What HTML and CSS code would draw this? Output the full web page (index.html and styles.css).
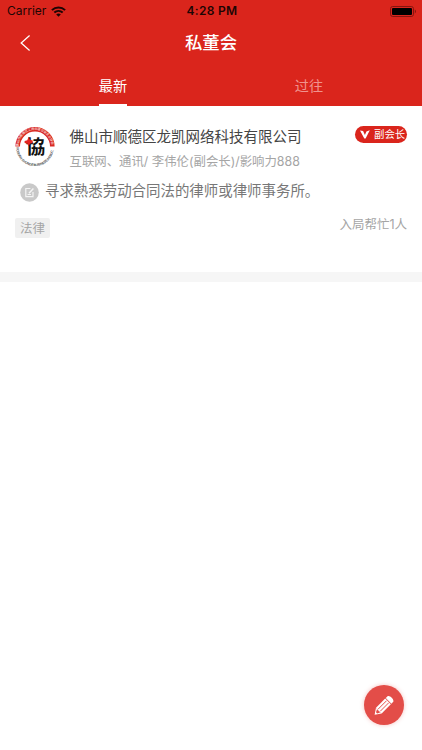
FILE: index.html
```
<!DOCTYPE html>
<html lang="zh-CN">
<head>
    <meta charset="UTF-8">
    <meta name="viewport" content="width=device-width, initial-scale=1.0">
    <title>私董会</title>
    <link rel="stylesheet" href="styles.css">
</head>
<body>
    <header class="header">
        <div class="status-bar">
            <div class="carrier">
                <span>Carrier</span>
                <svg class="wifi" width="15" height="11" viewBox="0 0 15 11" fill="none" stroke="#1d0504" stroke-width="2">
                    <path d="M0.9 4.1C4.6 0.5 10.4 0.5 14.1 4.1"/>
                    <path d="M3.3 6.6C5.7 4.4 9.3 4.4 11.7 6.6"/>
                    <path d="M7.5 10.8L5.2 8.5C6.5 7.3 8.5 7.3 9.8 8.5Z" fill="#1d0504" stroke="none"/>
                </svg>
            </div>
            <span class="time">4:28 PM</span>
            <svg class="battery" width="27" height="11" viewBox="0 0 27 11">
                <rect x="0.5" y="0.5" width="23" height="10" rx="2.2" fill="none" stroke="#85150f"/>
                <rect x="2" y="2" width="20" height="7" rx="1" fill="#000"/>
                <path d="M24.8 3.6C26.4 4.2 26.4 6.8 24.8 7.4Z" fill="#85150f"/>
            </svg>
        </div>
        <div class="nav-bar">
            <svg class="back" width="10" height="16" viewBox="0 0 10 16" fill="none" stroke="#fff" stroke-width="1.3">
                <path d="M9.6 0.6L1.2 8L9.6 15.4"/>
            </svg>
            <h1>私董会</h1>
        </div>
        <nav class="tabs">
            <div class="tab active"><span>最新</span></div>
            <div class="tab"><span>过往</span></div>
        </nav>
    </header>

    <article class="card">
        <div class="card-head">
            <svg class="avatar" width="40" height="40" viewBox="0 0 40 40">
                <defs>
                    <path id="ring-top" d="M3.5 20.4A16.5 16.5 0 0 1 36.5 20.4"/>
                    <path id="ring-bottom" d="M1.3 21.5A18.7 18.7 0 0 0 38.7 21.5"/>
                </defs>
                <path d="M2.7 20.6A17.3 17.3 0 0 1 37.3 20.6" fill="none" stroke="#d92a24" stroke-width="4.6"/>
                <text class="ring-cn"><textPath href="#ring-top" textLength="50">佛山市顺德区工商业联合会企业协会</textPath></text>
                <text class="ring-en"><textPath href="#ring-bottom" textLength="56">FOSHAN SHUNDE BUSINESS ASSOC.</textPath></text>
                <text class="logo-char" x="10.8" y="28">協</text>
                <path d="M13.6 10.8L15 13.7L17.7 14.5V17L15 17.8L13.6 20.5L12.3 17.5L9.6 17V15L12.3 14.3Z" fill="#e3241f"/>
            </svg>
            <div class="company">
                <h2>佛山市顺德区龙凯网络科技有限公司</h2>
                <p>互联网、通讯/ 李伟伦(副会长)/影响力888</p>
            </div>
            <div class="badge">
                <svg width="10" height="9" viewBox="0 0 10 9" fill="#fff">
                    <path d="M0 0.5L3.1 0.9L4.9 5L6.4 1.6L9.8 0.2L5.6 8.5H4.3Z"/>
                </svg>
                <span>副会长</span>
            </div>
        </div>
        <div class="request">
            <svg width="19" height="19" viewBox="0 0 19 19" fill="none">
                <circle cx="9.5" cy="9.5" r="9.3" fill="#c9c9c9"/>
                <path d="M10.4 5.5H5.8V13.6H13V9" stroke="#f4f4f4" stroke-width="1.2"/>
                <path d="M9 10.2L13.4 5.4" stroke="#f4f4f4" stroke-width="1.5"/>
                <path d="M7.6 11.5H11" stroke="#f4f4f4"/>
            </svg>
            <p>寻求熟悉劳动合同法的律师或律师事务所。</p>
        </div>
        <div class="card-foot">
            <span class="tag">法律</span>
            <span class="helpers">入局帮忙1人</span>
        </div>
    </article>

    <button class="compose" aria-label="发布">
        <svg width="22" height="22" viewBox="0 0 22 22">
            <g transform="translate(1.6 20.8) rotate(-45)">
                <path d="M0 0L6 -4V4Z" fill="#fff"/>
                <path d="M6 -4H19V4H6Z" fill="#fff"/>
                <path d="M19.8 -4H22C25 -4 25 4 22 4H19.8Z" fill="#fff"/>
                <path d="M6.5 -1.5H18.5M6.5 1.5H18.5" stroke="#e34d48" stroke-width="0.9"/>
                <path d="M2.8 -0.8L5.6 -2.2V2.2L2.8 0.8Z" fill="#e34d48"/>
            </g>
        </svg>
    </button>
</body>
</html>
```
FILE: styles.css
```
:root {
    --primary-color: #da251c;
    --muted-color: #a5a5a5;
}

* {
    box-sizing: border-box;
    margin: 0;
    padding: 0;
}

body {
    background: #fff;
    min-height: 100vh;
    font-family: Inter, "Noto Sans CJK SC", sans-serif;
}

.header {
    height: 106px;
    background: var(--primary-color);
    color: #fff;
}

.status-bar {
    display: grid;
    grid-template-columns: 1fr auto 1fr;
    align-items: center;
    height: 22px;
    padding: 0 5px 0 7px;
    color: #1d0504;
    font-size: 12px;
    line-height: 22px;
}

.carrier {
    display: flex;
    align-items: center;
    gap: 5px;
}

.time {
    font-weight: 600;
    letter-spacing: 0.3px;
}

.battery {
    justify-self: end;
}

.nav-bar {
    display: grid;
    grid-template-columns: 1fr auto 1fr;
    align-items: center;
    height: 42px;
    padding: 0 20px;
}

.nav-bar h1 {
    font-size: 17.4px;
    font-weight: 500;
    line-height: 24px;
}

.tabs {
    display: flex;
    height: 42px;
    padding: 0 15px;
}

.tab {
    flex: 1;
    display: flex;
    justify-content: center;
    font-size: 14.2px;
    line-height: 43px;
    color: #f0928d;
}

.tab.active {
    color: #fff;
}

.tab.active span {
    border-bottom: 2px solid #fff;
    height: 42px;
}

.card {
    height: 176px;
    padding: 20px 15px 0;
    border-bottom: 10px solid #f6f6f6;
}

.card-head {
    display: flex;
    height: 50px;
}

.company {
    flex: 1;
    margin-left: 14.5px;
    white-space: nowrap;
}

.company h2 {
    color: #444;
    font-size: 14.5px;
    font-weight: 400;
    line-height: 22px;
}

.company p {
    margin-top: 4px;
    color: var(--muted-color);
    font-size: 12.4px;
    line-height: 20px;
}

.badge {
    display: flex;
    align-items: center;
    gap: 4px;
    width: 52px;
    height: 17px;
    padding-left: 5px;
    border-radius: 9px;
    background: var(--primary-color);
    color: #fff;
    font-size: 10.4px;
    line-height: 17px;
    white-space: nowrap;
}

.request {
    display: flex;
    align-items: center;
    gap: 6px;
    height: 30px;
    padding-left: 5px;
    color: #777;
    font-size: 14.45px;
    line-height: 30px;
}

.request svg {
    margin-top: 3px;
}

.card-foot {
    display: flex;
    justify-content: space-between;
    align-items: flex-start;
    padding-top: 12px;
    color: var(--muted-color);
    font-size: 12.5px;
    line-height: 20px;
}

.tag {
    width: 35px;
    padding-top: 1px;
    border-radius: 2px;
    background: #f0f0f0;
    line-height: 19px;
    text-align: center;
}

.helpers {
    margin-top: -3px;
}

.ring-cn {
    fill: #fff;
    font-size: 3.2px;
}

.ring-en {
    fill: #444;
    font-size: 3.4px;
    font-weight: 600;
}

.logo-char {
    fill: #111;
    font-size: 19.5px;
    font-weight: 700;
}

.compose {
    position: fixed;
    right: 18px;
    bottom: 25px;
    display: flex;
    justify-content: center;
    align-items: center;
    width: 40px;
    height: 40px;
    border: none;
    border-radius: 50%;
    background: #e34d48;
    box-shadow: 0 0 4px rgba(227, 77, 72, 0.35);
    cursor: pointer;
}
```
